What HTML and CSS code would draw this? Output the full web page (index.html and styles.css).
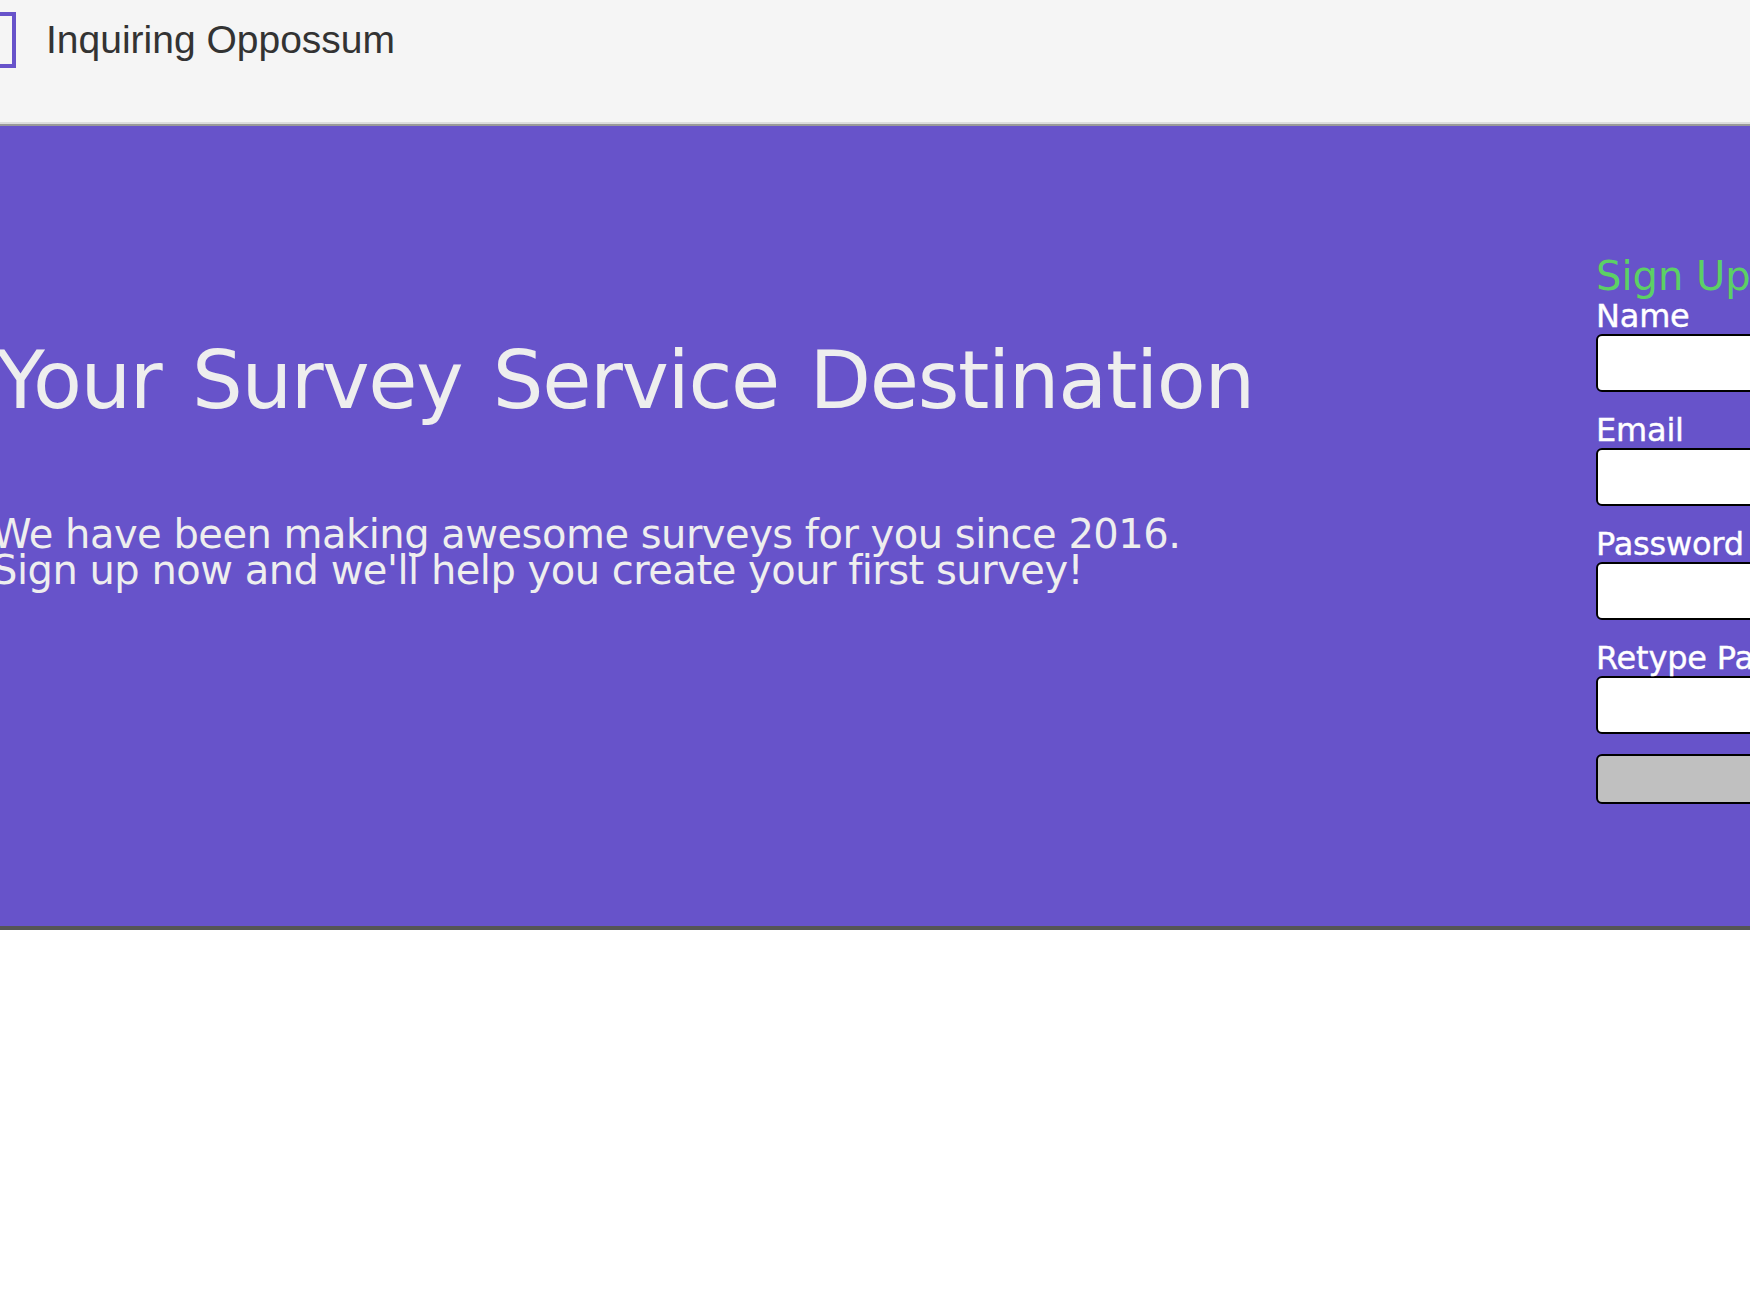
FILE: index.html
```html
<!DOCTYPE html>
<html lang="en">
<head>
  <meta charset="UTF-8" />
  <meta name="viewport" content="width=device-width, initial-scale=1.0"/>
  <title>Inquiring Oppossum</title>
  <link rel="stylesheet" href="styles.css">
</head>
<body>
  <header class="topbar">
    <div class="logo"></div>
    <span class="brand">Inquiring Oppossum</span>
  </header>

  <section class="hero">
    <div class="intro">
      <h1>Your Survey Service Destination</h1>
      <p>We have been making awesome surveys for you since 2016.<br>Sign up now and we'll help you create your first survey!</p>
    </div>

    <form class="signup">
      <h2>Sign Up</h2>
      <label for="name">Name</label>
      <input type="text" id="name" />
      <label for="email">Email</label>
      <input type="email" id="email" />
      <label for="password">Password</label>
      <input type="password" id="password" />
      <label for="retype">Retype Password</label>
      <input type="password" id="retype" />
      <button type="submit" class="btn"></button>
    </form>
  </section>
</body>
</html>
```

FILE: styles.css
```css
html, body {
  overflow: hidden;
}

body {
  margin: 0;
  width: 1750px;
  height: 1305px;
  background: #fff;
  font-family: "DejaVu Sans", Verdana, sans-serif;
}

.topbar {
  display: flex;
  align-items: flex-start;
  gap: 30px;
  height: 112px;
  padding-top: 12px;
  margin-left: -40px;
  background: #f5f5f5;
  border-bottom: 2px solid #999;
  box-shadow: inset 0 -2px 0 #ddd;
}

.logo {
  width: 48px;
  height: 48px;
  border: 4px solid #6753ca;
}

.brand {
  font-family: "Liberation Sans", Arial, sans-serif;
  font-size: 39px;
  line-height: 56px;
  color: #333;
}

.hero {
  display: flex;
  height: 800px;
  margin-left: -8px;
  background: #6753ca;
  border-bottom: 4px solid #555;
}

.intro {
  width: 1604px;
  flex-shrink: 0;
  padding-top: 205px;
  color: #eee;
}

.intro h1 {
  margin: 0 0 0 4px;
  font-size: 80px;
  font-weight: 400;
  line-height: 100px;
  letter-spacing: -1.35px;
  word-spacing: 6.5px;
}

.intro p {
  margin: 85px 0 0;
  font-size: 40px;
  line-height: 36px;
  letter-spacing: -0.5px;
}

.signup {
  flex-shrink: 0;
  width: 400px;
  padding-top: 128px;
  color: #fff;
}

.signup h2 {
  margin: 0;
  font-size: 40px;
  font-weight: 400;
  line-height: 44px;
  color: #5cd065;
}

.signup label {
  display: block;
  font-size: 32px;
  line-height: 36px;
  letter-spacing: -0.2px;
  -webkit-text-stroke: 0.4px #fff;
}

.signup input {
  display: block;
  box-sizing: border-box;
  width: 100%;
  height: 58px;
  margin-bottom: 20px;
  border: 2px solid #000;
  border-radius: 6px;
  background: #fff;
}

.btn {
  display: block;
  box-sizing: border-box;
  width: 100%;
  height: 50px;
  border: 2px solid #000;
  border-radius: 6px;
  background: #c0c0c0;
}
```
